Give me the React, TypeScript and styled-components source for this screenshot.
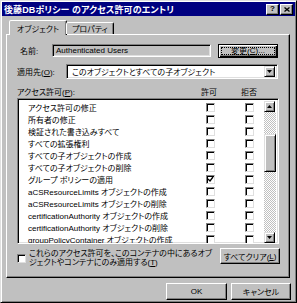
import styled, { createGlobalStyle } from "styled-components";

const GlobalStyle = createGlobalStyle`
    html, body {
        margin: 0;
        padding: 0;
        background: #c0c0c0;
    }
    body {
        font-family: "Liberation Sans", "Noto Sans CJK JP", sans-serif;
        font-size: 8px;
        font-feature-settings: "palt";
        color: #000;
    }
    u { text-decoration-thickness: 1px; text-underline-offset: 1px; }
`;

const Window = styled.div`
    width: 297px;
    height: 303px;
    box-sizing: border-box;
    background: #c0c0c0;
    border: 1px solid;
    border-color: #dfdfdf #000 #000 #dfdfdf;
    box-shadow: inset 1px 1px #fff, inset -1px -1px #808080;
    padding: 1px;
    display: flex;
    flex-direction: column;
`;
const TitleBar = styled.div`
    height: 14px;
    background: #000080;
    display: flex;
    align-items: center;
    padding: 0 2px 0 2px;
    color: #fff;
    font-weight: bold;
    font-size: 9px;
`;
const TitleText = styled.span`
    flex: 1;
    white-space: nowrap;
    letter-spacing: 0.1px;
`;
const CaptionButton = styled.div<{ $gap?: number }>`
    width: 11px;
    height: 9px;
    margin-left: ${p => p.$gap ?? 0}px;
    background: #c0c0c0;
    border: 1px solid;
    border-color: #fff #000 #000 #fff;
    box-shadow: inset -1px -1px #808080;
    display: flex;
    align-items: center;
    justify-content: center;
    color: #000;
    font-size: 8px;
    line-height: 1;
`;
const TabRow = styled.div`
    height: 14px;
    margin-top: 4px;
    padding-left: 7px;
    display: flex;
    align-items: flex-end;
    position: relative;
    z-index: 1;
`;
const Tab = styled.div<{ $active?: boolean }>`
    box-sizing: border-box;
    height: ${p => (p.$active ? 15 : 12)}px;
    margin-bottom: ${p => (p.$active ? -1 : 0)}px;
    padding: 0 ${p => (p.$active ? 7 : 5)}px;
    background: #c0c0c0;
    border: 1px solid;
    border-bottom: none;
    border-color: #fff #000 transparent #fff;
    border-radius: 2px 2px 0 0;
    box-shadow: inset -1px 0 #808080;
    display: flex;
    align-items: center;
    white-space: nowrap;
    margin-left: ${p => (p.$active ? 0 : -1)}px;
`;
const Panel = styled.div`
    margin-left: 4px;
    width: 284px;
    height: 244px;
    box-sizing: border-box;
    border: 1px solid;
    border-color: #fff #000 #000 #fff;
    box-shadow: inset -1px -1px #808080;
    padding: 9px 9px 0 10px;
    display: flex;
    flex-direction: column;
`;
const FieldRow = styled.div<{ $mt?: number; $h: number }>`
    display: flex;
    align-items: center;
    height: ${p => p.$h}px;
    margin-top: ${p => p.$mt ?? 0}px;
`;
const FieldLabel = styled.span<{ $w: number; $pl?: number }>`
    width: ${p => p.$w}px;
    padding-left: ${p => p.$pl ?? 0}px;
    box-sizing: border-box;
    white-space: nowrap;
`;
const ReadOnlyBox = styled.div`
    width: 159px;
    height: 13px;
    box-sizing: border-box;
    border: 1px solid;
    border-color: #808080 #fff #fff #808080;
    box-shadow: inset 1px 1px #000, inset -1px -1px #dfdfdf;
    padding-left: 3px;
    display: flex;
    align-items: center;
    white-space: nowrap;
`;
const Button = styled.div<{ $w: number; $h?: number; $focus?: boolean }>`
    width: ${p => p.$w}px;
    height: ${p => p.$h ?? 16}px;
    box-sizing: border-box;
    background: #c0c0c0;
    border: 1px solid;
    border-color: ${p => (p.$focus ? "#000" : "#fff #000 #000 #fff")};
    box-shadow: ${p =>
        p.$focus
            ? "inset 1px 1px #fff, inset -1px -1px #000, inset -2px -2px #808080"
            : "inset -1px -1px #808080"};
    display: flex;
    align-items: center;
    justify-content: center;
    white-space: nowrap;
    padding: 2px;
`;
const FocusRing = styled.span`
    flex: 1;
    align-self: stretch;
    display: flex;
    align-items: center;
    justify-content: center;
    outline: 1px dotted #000;
    outline-offset: -1px;
`;
const Combo = styled.div`
    width: 212px;
    height: 15px;
    box-sizing: border-box;
    background: #fff;
    border: 1px solid;
    border-color: #808080 #fff #fff #808080;
    box-shadow: inset 1px 1px #000, inset -1px -1px #dfdfdf;
    padding: 2px 2px 2px 5px;
    display: flex;
    align-items: center;
`;
const ComboText = styled.span`
    flex: 1;
    white-space: nowrap;
`;
const ArrowButton = styled.div<{ $h?: number }>`
    width: 11px;
    height: ${p => p.$h ?? 11}px;
    box-sizing: border-box;
    background: #c0c0c0;
    border: 1px solid;
    border-color: #dfdfdf #000 #000 #dfdfdf;
    box-shadow: inset 1px 1px #fff, inset -1px -1px #808080;
    display: flex;
    align-items: center;
    justify-content: center;
    flex-shrink: 0;
`;
const HeaderRow = styled.div`
    margin-top: 7px;
    height: 11px;
    display: grid;
    grid-template-columns: 184px 40px 1fr;
    align-items: center;
    white-space: nowrap;
`;
const ListBox = styled.div`
    margin-top: 1px;
    width: 262px;
    height: 146px;
    box-sizing: border-box;
    border: 1px solid;
    border-color: #808080 #fff #fff #808080;
    box-shadow: inset 1px 1px #000, inset -1px -1px #dfdfdf;
    padding: 2px;
    background: #fff;
    display: flex;
`;
const Rows = styled.div`
    flex: 1;
    height: 142px;
    overflow: hidden;
`;
const Row = styled.div`
    height: 12px;
    display: grid;
    grid-template-columns: 186px 39px 20px;
    align-items: center;
    white-space: nowrap;
`;
const RowName = styled.span`
    padding-left: 8px;
    overflow: hidden;
`;
const Check = styled.span`
    width: 9px;
    height: 9px;
    box-sizing: border-box;
    background: #fff;
    border: 1px solid;
    border-color: #808080 #dfdfdf #dfdfdf #808080;
    box-shadow: inset 1px 1px #000;
    display: flex;
    align-items: center;
    justify-content: center;
`;
const ScrollBar = styled.div`
    width: 12px;
    height: 142px;
    display: flex;
    flex-direction: column;
`;
const Track = styled.div<{ $h?: number }>`
    ${p => (p.$h ? `height: ${p.$h}px;` : "flex: 1;")}
    background: repeating-conic-gradient(#fff 0 25%, #c0c0c0 0 50%) 0 0 / 2px 2px;
`;
const Thumb = styled.div`
    height: 38px;
    box-sizing: border-box;
    background: #c0c0c0;
    border: 1px solid;
    border-color: #dfdfdf #000 #000 #dfdfdf;
    box-shadow: inset 1px 1px #fff, inset -1px -1px #808080;
`;
const BottomRow = styled.div`
    margin-top: 4px;
    display: flex;
    align-items: flex-start;
`;
const ApplyCheck = styled.div`
    flex: 1;
    display: flex;
    align-items: center;
    gap: 3px;
    margin-top: 1px;
`;
const ApplyText = styled.span`
    line-height: 9px;
    white-space: nowrap;
`;
const DialogButtons = styled.div`
    margin-top: 5px;
    padding-right: 4px;
    display: flex;
    justify-content: flex-end;
    gap: 4px;
`;

const rows = [
    "アクセス許可の修正",
    "所有者の修正",
    "検証された書き込みすべて",
    "すべての拡張権利",
    "すべての子オブジェクトの作成",
    "すべての子オブジェクトの削除",
    "グループ ポリシーの適用",
    "aCSResourceLimits オブジェクトの作成",
    "aCSResourceLimits オブジェクトの削除",
    "certificationAuthority オブジェクトの作成",
    "certificationAuthority オブジェクトの削除",
    "groupPolicyContainer オブジェクトの作成",
];

function Tick() {
    return (
        <svg width="7" height="7" viewBox="0 0 7 7">
            <path d="M1 3 L3 5 L6 1" fill="none" stroke="#000" strokeWidth="1.3" />
        </svg>
    );
}

function Triangle({ up }: { up?: boolean }) {
    return (
        <svg width="5" height="3" viewBox="0 0 5 3">
            <path d={up ? "M0 3 L5 3 L2.5 0 Z" : "M0 0 L5 0 L2.5 3 Z"} fill="#000" />
        </svg>
    );
}

function App() {
    return (
        <>
            <GlobalStyle />
            <Window>
                <TitleBar>
                    <TitleText>後藤DBポリシー のアクセス許可のエントリ</TitleText>
                    <CaptionButton>
                        <b>?</b>
                    </CaptionButton>
                    <CaptionButton $gap={1}>
                        <svg width="6" height="5" viewBox="0 0 6 5">
                            <path d="M0.5 0.5 L5.5 4.5 M5.5 0.5 L0.5 4.5" stroke="#000" strokeWidth="1.3" />
                        </svg>
                    </CaptionButton>
                </TitleBar>
                <TabRow>
                    <Tab $active>オブジェクト</Tab>
                    <Tab>プロパティ</Tab>
                </TabRow>
                <Panel>
                    <FieldRow $h={13}>
                        <FieldLabel $w={35} $pl={3}>名前:</FieldLabel>
                        <ReadOnlyBox>Authenticated Users</ReadOnlyBox>
                        <Button $w={60} $h={14} $focus style={{ marginLeft: 7 }}>
                            <FocusRing>変更(<u>C</u>)...</FocusRing>
                        </Button>
                    </FieldRow>
                    <FieldRow $h={15} $mt={7}>
                        <FieldLabel $w={49}>適用先(<u>O</u>):</FieldLabel>
                        <Combo>
                            <ComboText>このオブジェクトとすべての子オブジェクト</ComboText>
                            <ArrowButton>
                                <Triangle />
                            </ArrowButton>
                        </Combo>
                    </FieldRow>
                    <HeaderRow>
                        <span>アクセス許可(<u>P</u>):</span>
                        <span>許可</span>
                        <span>拒否</span>
                    </HeaderRow>
                    <ListBox>
                        <Rows>
                            {rows.map((name, i) => (
                                <Row key={name}>
                                    <RowName>{name}</RowName>
                                    <Check>{i === 6 && <Tick />}</Check>
                                    <Check />
                                </Row>
                            ))}
                        </Rows>
                        <ScrollBar>
                            <ArrowButton $h={11}>
                                <Triangle up />
                            </ArrowButton>
                            <Track $h={22} />
                            <Thumb />
                            <Track />
                            <ArrowButton $h={11}>
                                <Triangle />
                            </ArrowButton>
                        </ScrollBar>
                    </ListBox>
                    <BottomRow>
                        <ApplyCheck>
                            <Check />
                            <ApplyText>
                                これらのアクセス許可を、このコンテナの中にあるオブ
                                <br />
                                ジェクトやコンテナにのみ適用する(<u>T</u>)
                            </ApplyText>
                        </ApplyCheck>
                        <Button $w={60} $h={16}>
                            すべてクリア(<u>L</u>)
                        </Button>
                    </BottomRow>
                </Panel>
                <DialogButtons>
                    <Button $w={61} $h={17}>OK</Button>
                    <Button $w={60} $h={17}>キャンセル</Button>
                </DialogButtons>
            </Window>
        </>
    );
}

export default App;
